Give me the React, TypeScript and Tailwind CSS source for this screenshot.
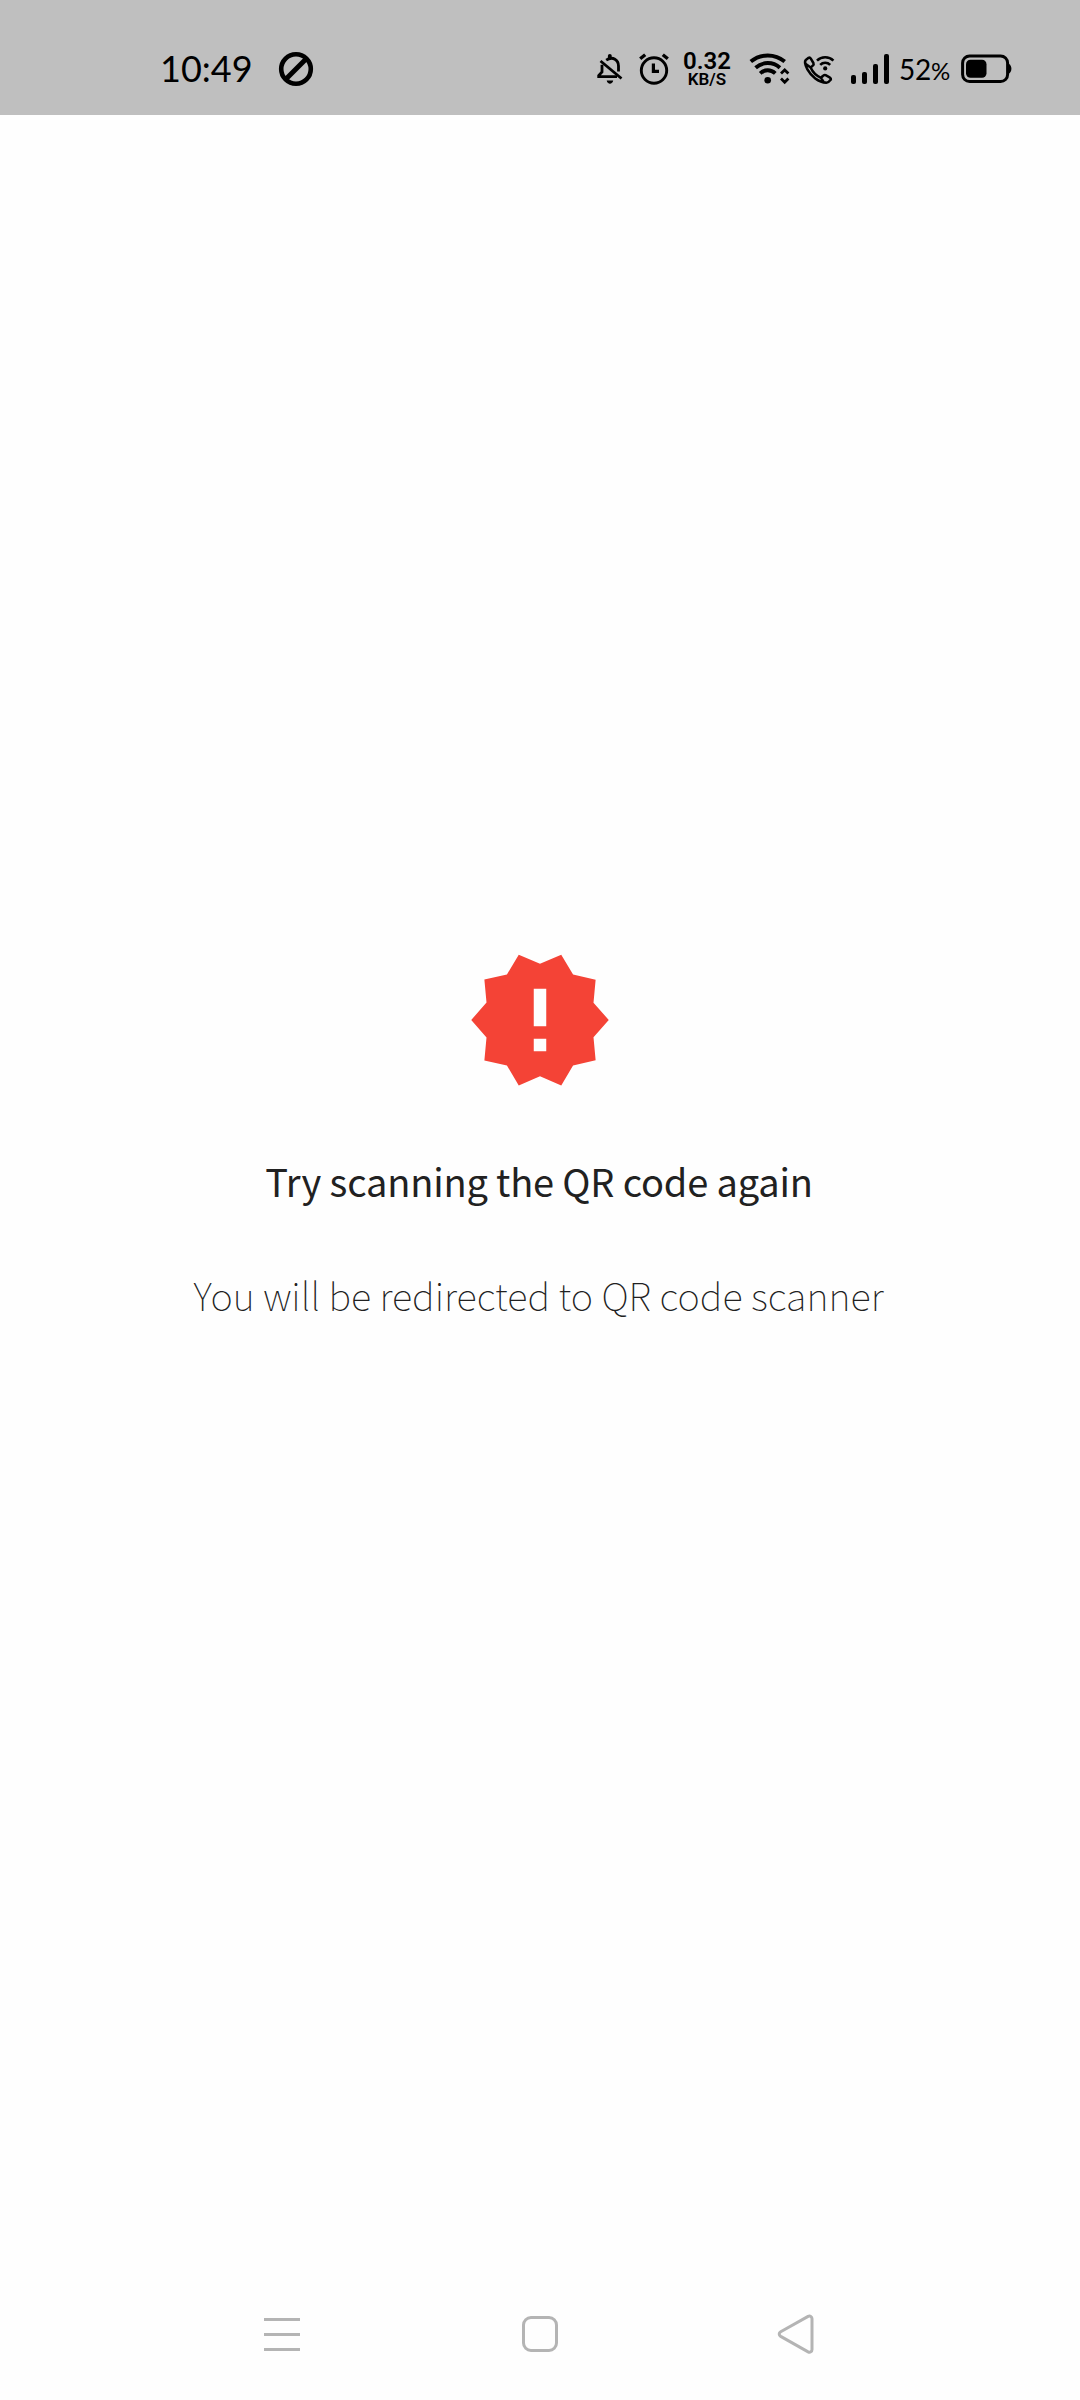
import type { ReactNode } from "react";

type GlyphProps = {
  box: string;
  className: string;
  children: ReactNode;
};

function Glyph({ box, className, children }: GlyphProps) {
  return (
    <svg viewBox={box} className={`shrink-0 ${className}`} fill="none" stroke="currentColor" aria-hidden="true">
      {children}
    </svg>
  );
}

function StatusBar() {
  return (
    <header className="flex h-[115px] shrink-0 items-center bg-[#bfbfbf] pt-[23px] text-black">
      <span className="ml-[160px] w-[118px] pb-[2px] font-['Lato',sans-serif] text-[36px] leading-none">10:49</span>
      {/* do not disturb */}
      <Glyph box="0 0 36 36" className="size-9">
        <circle cx="18" cy="18" r="14.8" strokeWidth="4.6" />
        <path d="M7.5 28.5L28.5 7.5" strokeWidth="5" />
      </Glyph>

      {/* muted bell */}
      <Glyph box="0 0 30 34" className="ml-[281px] h-[34px] w-[30px]">
        <path d="M5.5 9L26.5 26.5" strokeWidth="2.8" />
        <path d="M7 12.8V20L3.7 23.5V24.6H22M11.2 8.1C18 3.5 23.5 8.4 23.5 14V19.5" strokeWidth="2.8" />
        <path d="M14.8 3.8V6" strokeWidth="3.8" strokeLinecap="round" />
        <path d="M11.7 28.6H18.2C17.5 32.8 12.4 32.8 11.7 28.6Z" fill="currentColor" stroke="none" />
      </Glyph>

      {/* alarm */}
      <Glyph box="0 0 34 34" className="ml-[12px] size-[34px]">
        <circle cx="17" cy="18.5" r="12.7" strokeWidth="2.9" />
        <path d="M3.2 6.8L8.2 2.7M30.8 6.8L25.8 2.7" strokeWidth="3.4" />
        <path d="M16.4 11.5V19.4H22" strokeWidth="3.2" />
      </Glyph>

      <div className="ml-[11px] flex w-[50px] flex-col items-center font-['Roboto',sans-serif] leading-none">
        <span className="h-[20px] text-[24px] leading-[20px] font-semibold">0.32</span>
        <span className="h-[16px] text-[17px] leading-[17px] font-semibold">KB/S</span>
      </div>

      {/* wifi with traffic arrows */}
      <Glyph box="0 0 42 34" className="ml-[16px] h-[34px] w-[42px]">
        <path
          d="M2.8 9.6C12.5 1.4 27 1.4 36.7 9.6M7.6 15.7C14.5 9.5 25 9.5 31.9 15.7M12.2 21.4C16.7 17.2 22.8 17.2 27.3 21.4"
          strokeWidth="3.9"
        />
        <circle cx="19.7" cy="28.2" r="3.3" fill="currentColor" stroke="none" />
        <path d="M33 21.6L36.7 18L40.4 21.6M33 26.6L36.7 30.2L40.4 26.6" strokeWidth="2.8" />
      </Glyph>

      {/* wifi calling */}
      <Glyph box="0 0 34 34" className="ml-[11px] size-[34px]">
        <path
          d="M7.6 5.8L4.8 8C3.6 9.2 4 13 6.4 17.4C10 24 17.4 30.4 25.4 30.8C27.2 30.8 28.4 29.6 29.9 27.6C30.2 26.6 29.6 26 28.6 25.4L24.6 23.2C23.4 22.6 22.6 23 21.8 24L20 25.8C16 24.2 11.6 20 9.6 15.6L12 13.4C12.8 12.6 12.8 12 12.4 11L9.8 6.6C9.2 5.6 8.6 5.2 7.6 5.8ZM4.8 12L9.6 15.6M20 25.8L22.6 30"
          strokeWidth="2.5"
          strokeLinejoin="round"
        />
        <path d="M16 8.6C20.4 4.2 28 4.2 32.4 8.6M19.2 12.8C22 10 26.4 10 29.2 12.8" strokeWidth="2.6" />
        <circle cx="24.2" cy="16.4" r="2.1" fill="currentColor" stroke="none" />
      </Glyph>

      <div className="ml-[16px] flex h-[30px] items-end gap-[6px]">
        <i className="h-[9px] w-[5px] rounded-[2px] bg-black" />
        <i className="h-[12px] w-[5px] rounded-[2px] bg-black" />
        <i className="h-[20px] w-[5px] rounded-[2px] bg-black" />
        <i className="h-[30px] w-[5px] rounded-[2px] bg-black" />
      </div>

      <span className="ml-[10px] w-[60px] font-['Lato',sans-serif] text-[28px] leading-none tracking-[-0.3px] whitespace-nowrap">
        52<span className="text-[24px]">%</span>
      </span>

      {/* battery */}
      <Glyph box="0 0 52 30" className="ml-[1px] h-[30px] w-[52px]">
        <rect x="2.6" y="2" width="45" height="25.5" rx="7" strokeWidth="3" />
        <rect x="6" y="5.8" width="20.5" height="18" rx="4.5" fill="currentColor" stroke="none" />
        <path d="M48.5 9.5C52.4 11.5 52.4 18 48.5 20Z" fill="currentColor" stroke="none" />
      </Glyph>
    </header>
  );
}

function ScanError() {
  return (
    <main className="flex flex-1 flex-col items-center pt-[830px] font-['Noto_Sans_CJK_SC',sans-serif] text-[#212121]">
      <svg viewBox="0 0 24 24" className="mr-px size-[150px] shrink-0 fill-[#f44336]" aria-hidden="true">
        <path d="M23 12l-2.44-2.78.34-3.68-3.61-.82-1.89-3.18L12 3 8.6 1.54 6.71 4.72l-3.61.81.34 3.68L1 12l2.44 2.78-.34 3.69 3.61.82 1.89 3.18L12 21l3.4 1.46 1.89-3.18 3.61-.82-.34-3.68L23 12zm-10 5h-2v-2h2v2zm0-4h-2V7h2v6z" />
      </svg>
      <h1 className="mt-[56px] mr-[2px] text-[38px] leading-[60px] tracking-[-0.17px] whitespace-nowrap">
        Try scanning the QR code again
      </h1>
      <p className="mt-[54px] mr-[3px] text-[38px] leading-[60px] font-thin tracking-[0.04px] whitespace-nowrap">
        You will be redirected to QR code scanner
      </p>
    </main>
  );
}

function NavigationBar() {
  return (
    <nav className="flex h-[132px] shrink-0 items-center justify-between pr-[260px] pl-[260px] text-[#b4b4b4]">
      <button aria-label="Recent apps">
        <Glyph box="0 0 44 44" className="size-11">
          <path d="M4 7.5H40M4 22.5H40M4 37.5H40" strokeWidth="3" />
        </Glyph>
      </button>
      <button aria-label="Home">
        <Glyph box="0 0 44 44" className="size-11">
          <rect x="5.5" y="5.5" width="33" height="33" rx="7.5" strokeWidth="3" />
        </Glyph>
      </button>
      <button aria-label="Back">
        <Glyph box="0 0 44 44" className="size-11">
          <path
            d="M4.7 19.8L32.1 4.4C34.1 3.4 36 4.6 36 6.8V37.4C36 39.6 34.1 40.8 32.1 39.8L4.7 24.4C2.7 23.2 2.7 21 4.7 19.8Z"
            strokeWidth="3"
          />
        </Glyph>
      </button>
    </nav>
  );
}

export default function App() {
  return (
    <div className="flex h-[2400px] w-[1080px] flex-col overflow-hidden bg-[#fefefe]">
      <StatusBar />
      <ScanError />
      <NavigationBar />
    </div>
  );
}
